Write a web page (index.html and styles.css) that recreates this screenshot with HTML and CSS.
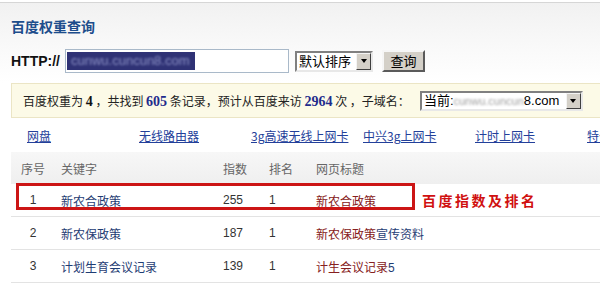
FILE: index.html
```html
<!DOCTYPE html>
<html lang="zh-CN">
<head>
    <meta charset="UTF-8">
    <title>百度权重查询</title>
    <link rel="stylesheet" href="styles.css">
</head>
<body>

<div class="top">
    <h1 class="title">百度权重查询</h1>
    <div class="search">
        <span class="proto">HTTP://</span>
        <div class="url"><span class="sel"><span class="blur">cunwu.cuncun8.com</span></span></div>
        <div class="drop sort">
            <span class="drop-text">默认排序</span>
            <span class="drop-btn"><i></i></span>
        </div>
        <button class="go" type="button">查询</button>
    </div>
</div>

<div class="summary">
    <span class="stat">百度权重为 <b>4</b> ，共找到 <b class="num">605</b> 条记录，预计从百度来访 <b class="num">2964</b> 次 ，子域名：</span>
    <div class="drop sub">
        <span class="drop-text">当前:<span class="blur">cunwu.cuncun</span>8.com</span>
        <span class="drop-btn"><i></i></span>
    </div>
</div>

<div class="links">
    <a href="#">网盘</a>
    <a href="#">无线路由器</a>
    <a href="#">3g高速无线上网卡</a>
    <a href="#">中兴3g上网卡</a>
    <a href="#">计时上网卡</a>
    <a href="#">特价上网卡</a>
</div>

<div class="result">
    <div class="row thead">
        <span class="c-no">序号</span>
        <span>关键字</span>
        <span>指数</span>
        <span>排名</span>
        <span>网页标题</span>
    </div>
    <div class="row">
        <span class="c-no">1</span>
        <span class="kw">新农合政策</span>
        <span>255</span>
        <span>1</span>
        <span class="hit">新农合政策</span>
    </div>
    <div class="row">
        <span class="c-no">2</span>
        <span class="kw">新农保政策</span>
        <span>187</span>
        <span>1</span>
        <span><span class="hit">新农保政策</span><span class="kw">宣传资料</span></span>
    </div>
    <div class="row">
        <span class="c-no">3</span>
        <span class="kw">计划生育会议记录</span>
        <span>139</span>
        <span>1</span>
        <span><span class="hit">计生会议记录</span><span class="kw">5</span></span>
    </div>

    <div class="mark"></div>
    <div class="note">百度指数及排名</div>
</div>

</body>
</html>
```

FILE: styles.css
```css
/* General Styles */
* {
    box-sizing: border-box;
    margin: 0;
    padding: 0;
}

body {
    font-family: "Liberation Sans", "Noto Sans CJK SC", sans-serif;
    font-size: 12px;
    color: #333;
    background: #fff;
    overflow: hidden;
    width: 600px;
}

/* Top search area */
.top {
    margin-top: 2px;
    border-top: 1px solid #d6d6d6;
    height: 81px;
    padding-left: 11px;
    background: linear-gradient(#f1f1f1, #fafafa 60%, #fff);
}

.title {
    font-size: 14px;
    font-weight: bold;
    line-height: 18px;
    padding-top: 15px;
    color: #1d4d8c;
}

.search {
    display: flex;
    align-items: center;
    margin-top: 13px;
    height: 24px;
}

.proto {
    width: 54px;
    font-size: 14px;
    font-weight: bold;
    color: #111;
}

.url {
    width: 224px;
    height: 24px;
    padding: 2px 1px;
    border: 1px solid #a9b9c9;
    background: #fff;
}

.url .sel {
    display: block;
    width: 128px;
    height: 18px;
    background: #2f3275;
    overflow: hidden;
}

.url .blur {
    display: block;
    padding-left: 4px;
    font-size: 13px;
    line-height: 18px;
    color: #8d92c6;
    filter: blur(1.2px);
}

/* Classic dropdowns */
.drop {
    display: flex;
    align-items: stretch;
    border: 2px solid;
    border-color: #808080 #e8e8e8 #e8e8e8 #808080;
    background: #fff;
    font-size: 13px;
    color: #000;
}

.drop-text {
    flex: 1;
    padding-left: 2px;
    white-space: nowrap;
    overflow: hidden;
}

.drop-btn {
    flex: 0 0 15px;
    display: flex;
    align-items: center;
    justify-content: center;
    background: #d4d0c8;
    border: 1px solid;
    border-color: #f4f4f4 #404040 #404040 #f4f4f4;
}

.drop-btn i {
    border-left: 3.5px solid transparent;
    border-right: 3.5px solid transparent;
    border-top: 4px solid #000;
}

.sort {
    width: 78px;
    height: 21px;
    margin-left: 6px;
    line-height: 17px;
}

.go {
    width: 43px;
    height: 22px;
    margin-left: 9px;
    font-family: "Noto Sans CJK SC", sans-serif;
    font-size: 13px;
    line-height: 16px;
    color: #000;
    background: #d4d0c8;
    border: 2px solid;
    border-color: #f6f6f6 #5a5a5a #5a5a5a #f6f6f6;
}

/* Summary bar */
.summary {
    display: flex;
    align-items: center;
    height: 35px;
    margin-left: 11px;
    padding-left: 11px;
    background: #fcfae7;
    border: 1px solid #ebe5c5;
    border-right: none;
    color: #222;
}

.stat {
    white-space: nowrap;
    font-family: "Noto Sans CJK SC", sans-serif;
    font-size: 12px;
}

.stat b {
    font-family: "Liberation Serif", serif;
    font-size: 14px;
    color: #111;
}

.stat b.num {
    color: #1f2c8c;
}

.sub {
    width: 163px;
    height: 20px;
    margin-left: 10px;
    line-height: 16px;
    font-size: 13px;
}

.sub .blur {
    font-size: 11px;
    color: #a0a0a0;
    filter: blur(1.3px);
}

/* Related keyword links */
.links {
    display: flex;
    height: 34px;
    align-items: center;
    padding-left: 27px;
    white-space: nowrap;
    overflow: hidden;
}

.links a {
    flex: 0 0 112px;
    color: #23409a;
    text-decoration: underline;
    font-family: "Noto Sans CJK SC", sans-serif;
    font-size: 12px;
}

/* Result table */
.result {
    position: relative;
    margin-left: 11px;
}

.row {
    display: grid;
    grid-template-columns: 44px 162px 46px 47px 1fr;
    align-items: center;
    height: 33px;
    border-bottom: 1px solid #e3e3e3;
    font-size: 12px;
    color: #333;
}

.row span {
    padding-left: 6px;
    white-space: nowrap;
}

.row span span {
    padding-left: 0;
}

.row .c-no {
    padding-left: 0;
    text-align: center;
}

.thead {
    height: 32px;
    border-bottom: none;
    color: #666;
    background: linear-gradient(#f7f7f7, #efefef);
}

.kw {
    color: #1f3d74;
}

.hit {
    color: #862020;
}

/* Annotation overlay */
.mark {
    position: absolute;
    left: 5px;
    top: 31px;
    width: 399px;
    height: 27px;
    border: 3px solid #cc1515;
}

.note {
    position: absolute;
    left: 411px;
    top: 39px;
    font-family: "Noto Sans CJK SC", sans-serif;
    font-size: 14px;
    font-weight: bold;
    letter-spacing: 2.5px;
    line-height: 18px;
    color: #d01010;
}
```
